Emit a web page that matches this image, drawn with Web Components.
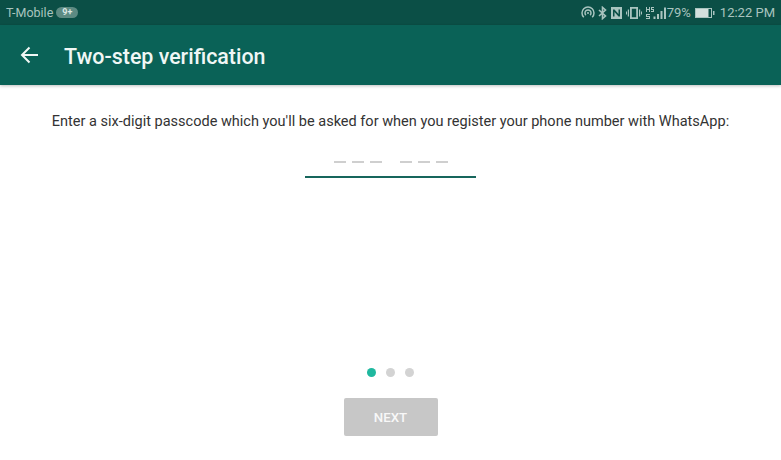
<!DOCTYPE html>
<html>
<head>
<meta charset="utf-8">
<title>Two-step verification</title>
<style>
  html, body { margin: 0; height: 100%; background: #fff; }
  body { font-family: Roboto, "Noto Sans", sans-serif; overflow: hidden; }
  two-step-screen { height: 460px; }
</style>
</head>
<body>
<two-step-screen>
  <status-bar carrier="T-Mobile" badge="9+" battery="79%" time="12:22 PM"></status-bar>
  <app-bar>Two-step verification</app-bar>
  <passcode-step>Enter a six-digit passcode which you'll be asked for when you register your phone number with WhatsApp:</passcode-step>
</two-step-screen>

<script>
class TwoStepScreen extends HTMLElement {
  constructor() {
    super();
    this.attachShadow({ mode: "open" }).innerHTML = `
      <style>
        :host { display: flex; flex-direction: column; background: #fff; }
      </style>
      <slot></slot>`;
  }
}

class StatusBar extends HTMLElement {
  constructor() {
    super();
    this.attachShadow({ mode: "open" });
  }

  connectedCallback() {
    const carrier = this.getAttribute("carrier");
    const badge = this.getAttribute("badge");
    const battery = this.getAttribute("battery");
    const time = this.getAttribute("time");
    this.shadowRoot.innerHTML = `
      <style>
        :host {
          display: flex;
          align-items: center;
          justify-content: space-between;
          height: 25px;
          padding: 0 6px 0 6px;
          background: #0b4f46;
          color: #a9c4bf;
          font-size: 13px;
        }
        .left, .right { display: flex; align-items: center; }
        .carrier { font-size: 12.500px; }
        .badge {
          margin-left: 3px;
          padding: 0 6px;
          height: 11px;
          line-height: 11px;
          border-radius: 6px;
          background: #5d8b83;
          color: #dce8e5;
          font-size: 9px;
          font-weight: 700;
        }
        svg { display: block; fill: #a9c4bf; }
        .right svg { margin-right: 3px; }
        .right svg.signal { margin-right: 0; }
        .right svg.battery { margin-right: 5px; }
        .pct { margin-right: 3px; }
      </style>
      <div class="left"><span class="carrier">${carrier}</span><span class="badge">${badge}</span></div>
      <div class="right">
        <svg width="14" height="14" viewBox="0 0 14 14" style="fill:none;stroke:#a9c4bf;stroke-width:1.500"><path d="M2.800 11.200a6 6 0 1 1 8.400 0M4.900 9.100a3 3 0 1 1 4.200 0"/><circle cx="7" cy="7" r="1" style="fill:#a9c4bf;stroke:none"/></svg>
        <svg width="9" height="14" viewBox="0 0 9 14" style="fill:none;stroke:#a9c4bf;stroke-width:1.600"><path d="M1 4l6.500 6-3 2.600V1.400l3 2.600L1 10"/></svg>
        <svg width="13" height="14" viewBox="0 0 13 14"><path fill-rule="evenodd" d="M1 1h11v12H1zM3 3.500v7h1.500V6l4 4.500h1.500v-7H8.500V8l-4-4.500z"/></svg>
        <svg width="16" height="14" viewBox="0 0 16 14"><path fill-rule="evenodd" d="M4 1h8v12H4zM5.800 2.800v8.400h4.400V2.800zM1.800 3.500h1.200v7H1.800zM13 3.500h1.200v7H13zM0 5.500h1v3H0zM15 5.500h1v3h-1z"/></svg>
        <svg class="signal" width="22" height="14" viewBox="0 0 22 14"><path d="M1 1h1v2h2V1h1v5H4V4H2v2H1zM6 1h3v1H7v1h2v3H6V5h2V4H6zM1 8h4v1H2v1h3v3H1v-1h3v-1H1zM8.500 10.500h2v2.500h-2zM12 8h2v5h-2zM15.500 5h2v8h-2zM19 1.500h2V13h-2z"/></svg>
        <span class="pct">${battery}</span>
        <svg class="battery" width="21" height="12" viewBox="0 0 21 12"><path fill-rule="evenodd" d="M1 1h17v10H1zM2 2v8h15V2z"/><path style="fill:#d3e0dd" d="M2 2h12.500v8H2z"/><path d="M19 4h1.500v4H19z"/></svg>
        <span>${time}</span>
      </div>`;
  }
}

class AppBar extends HTMLElement {
  constructor() {
    super();
    this.attachShadow({ mode: "open" }).innerHTML = `
      <style>
        :host {
          display: flex;
          align-items: center;
          gap: 25px;
          height: 60px;
          padding-left: 20px;
          background: #0a6257;
          color: #f0f7f5;
          font-size: 21.400px;
          font-weight: 500;
          box-shadow: 0 1px 3px rgba(0, 0, 0, .25);
          position: relative;
        }
        svg { display: block; }
        .title { padding-top: 2px; }
      </style>
      <svg width="19" height="18" viewBox="0 0 19 18" fill="none" stroke="#f0f7f5" stroke-width="2">
        <path d="M18 9H2M9.500 1.500 2 9l7.500 7.500"/>
      </svg>
      <span class="title"><slot></slot></span>`;
  }
}

class PasscodeField extends HTMLElement {
  constructor() {
    super();
    this.attachShadow({ mode: "open" }).innerHTML = `
      <style>
        :host {
          display: flex;
          justify-content: center;
          width: 171px;
          height: 27px;
          box-sizing: border-box;
          border-bottom: 2px solid #17665c;
        }
        .group { display: flex; gap: 6px; padding-top: 10px; }
        .group + .group { margin-left: 18px; }
        i { display: block; width: 12px; height: 1.500px; background: #cfcfcf; }
      </style>
      <div class="group"><i></i><i></i><i></i></div>
      <div class="group"><i></i><i></i><i></i></div>`;
  }
}

class StepDots extends HTMLElement {
  constructor() {
    super();
    this.attachShadow({ mode: "open" }).innerHTML = `
      <style>
        :host { display: flex; gap: 10px; }
        i { display: block; width: 9px; height: 9px; border-radius: 50%; background: #d3d3d3; }
        i.on { background: #1fb89f; }
      </style>
      <i class="on"></i><i></i><i></i>`;
  }
}

class NextButton extends HTMLElement {
  constructor() {
    super();
    this.attachShadow({ mode: "open" }).innerHTML = `
      <style>
        :host {
          display: flex;
          align-items: center;
          justify-content: center;
          width: 94px;
          height: 38px;
          border-radius: 2px;
          background: #c7c7c7;
          color: #f8f8f8;
          font-size: 13.300px;
          font-weight: 500;
        }
      </style>
      <slot></slot>`;
  }
}

class PasscodeStep extends HTMLElement {
  constructor() {
    super();
    this.attachShadow({ mode: "open" }).innerHTML = `
      <style>
        :host {
          display: flex;
          flex-direction: column;
          align-items: center;
          flex: 1;
          padding-top: 28px;
          color: #333;
          font-size: 14.530px;
        }
        .intro { line-height: 18px; white-space: nowrap; }
        passcode-field { margin-top: 20px; }
        step-dots { margin-top: 190px; }
        next-button { margin-top: 21px; }
      </style>
      <div class="intro"><slot></slot></div>
      <passcode-field></passcode-field>
      <step-dots></step-dots>
      <next-button>NEXT</next-button>`;
  }
}

customElements.define("two-step-screen", TwoStepScreen);
customElements.define("status-bar", StatusBar);
customElements.define("app-bar", AppBar);
customElements.define("passcode-field", PasscodeField);
customElements.define("step-dots", StepDots);
customElements.define("next-button", NextButton);
customElements.define("passcode-step", PasscodeStep);
</script>
</body>
</html>
